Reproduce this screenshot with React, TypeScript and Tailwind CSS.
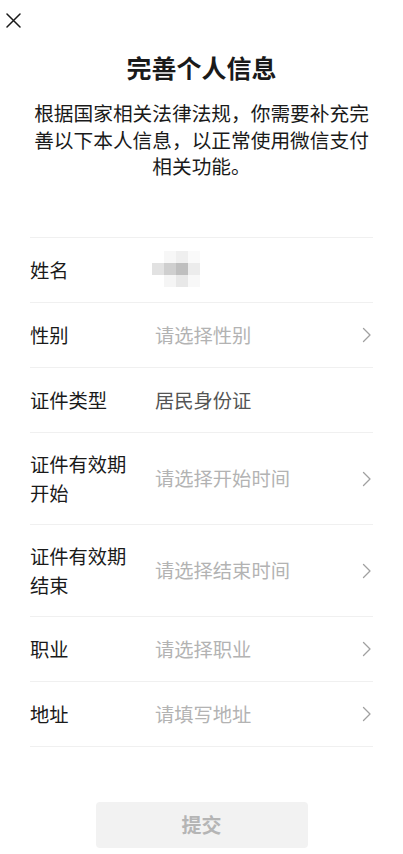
import React from 'react';

// Rows of the personal info form
const rows: { label: string[]; value?: string; placeholder?: string; arrow?: boolean; blurred?: boolean }[] = [
  { label: ['姓名'], blurred: true },
  { label: ['性别'], placeholder: '请选择性别', arrow: true },
  { label: ['证件类型'], value: '居民身份证' },
  { label: ['证件有效期', '开始'], placeholder: '请选择开始时间', arrow: true },
  { label: ['证件有效期', '结束'], placeholder: '请选择结束时间', arrow: true },
  { label: ['职业'], placeholder: '请选择职业', arrow: true },
  { label: ['地址'], placeholder: '请填写地址', arrow: true },
];

const mosaic = [
  ['#ffffff', '#f7f7f7', '#efefef', '#fafafa'],
  ['#e2e2e2', '#cfcfcf', '#bfbfbf', '#ececec'],
  ['#ffffff', '#f5f5f5', '#e8e8e8', '#f8f8f8'],
];

function Mosaic() {
  return (
    <div className="grid grid-cols-[repeat(4,12px)] grid-rows-[repeat(3,12px)] -mt-[3px] -ml-[3px]">
      {mosaic.flat().map((c, i) => (
        <div key={i} style={{ backgroundColor: c }} />
      ))}
    </div>
  );
}

function Chevron() {
  return (
    <svg width="10" height="16" viewBox="0 0 10 16" fill="none" className="flex-shrink-0">
      <path d="M1.5 1.5 L8 8 L1.5 14.5" stroke="#a0a0a0" strokeWidth="1.3" strokeLinecap="round" strokeLinejoin="round" />
    </svg>
  );
}

export default function App() {
  return (
    <div className="w-[403px] min-h-[854px] bg-white font-['Noto_Sans_CJK_SC','Noto_Sans',sans-serif] text-[#1a1a1a]">
      {/* Barra superior */}
      <div className="h-[40px] flex items-center pl-[6px]">
        <svg width="15" height="15" viewBox="0 0 15 15" fill="none">
          <path d="M1 1 L14 14 M14 1 L1 14" stroke="#1a1a1a" strokeWidth="1.5" strokeLinecap="round" />
        </svg>
      </div>

      <h1 className="mt-[10px] text-center text-[25px] leading-[35px] font-bold">完善个人信息</h1>

      <p className="mt-[15px] mx-auto w-[345px] text-center text-[19.7px] leading-[26.7px] text-[#1a1a1a]">
        根据国家相关法律法规，你需要补充完善以下本人信息，以正常使用微信支付相关功能。
      </p>

      {/* Lista de campos */}
      <div className="mt-[57px] mx-[30px] border-b border-[#f0f0f0]">
        {rows.map((row) => (
          <div
            key={row.label.join('')}
            className={`flex items-center border-t border-[#f0f0f0] ${row.label.length > 1 ? 'h-[92px]' : 'h-[65px]'}`}
          >
            <div className="w-[125px] flex-shrink-0 text-[19.3px] leading-[29px]">
              {row.label.map((l) => (
                <div key={l}>{l}</div>
              ))}
            </div>
            <div className="flex-1 text-[19.3px] leading-[29px]">
              {row.blurred && <Mosaic />}
              {row.value && <span className="text-[#555555]">{row.value}</span>}
              {row.placeholder && <span className="text-[#b3b3b3]">{row.placeholder}</span>}
            </div>
            {row.arrow && (
              <div className="pr-[1px]">
                <Chevron />
              </div>
            )}
          </div>
        ))}
      </div>

      <div className="mt-[55px] flex justify-center">
        <button className="w-[212px] h-[46px] rounded-[4px] bg-[#f2f2f2] text-[20px] font-bold text-[#b5b5b5]">
          提交
        </button>
      </div>
    </div>
  );
}
